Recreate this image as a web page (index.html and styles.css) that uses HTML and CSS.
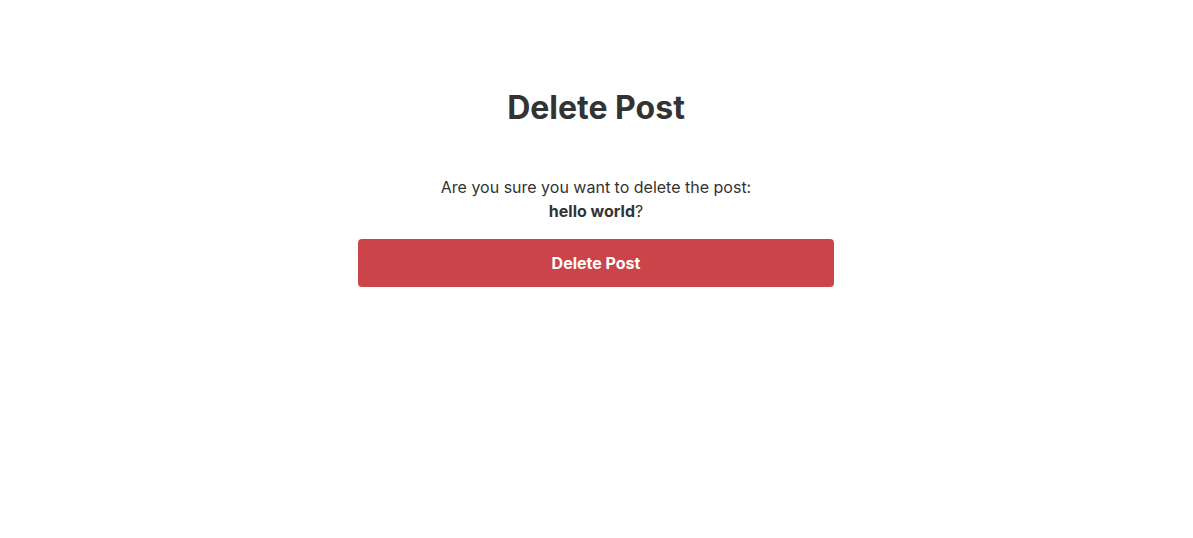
FILE: index.html
```html
<!DOCTYPE html>
<html lang="en">
<head>
<meta charset="utf-8">
<title>Delete Post</title>
<link rel="stylesheet" href="styles.css">
</head>
<body>
<main class="page">
  <h1 class="title">Delete Post</h1>
  <form class="form">
    <p class="message">Are you sure you want to delete the post:<br><strong>hello world</strong>?</p>
    <button type="button" class="btn-danger">Delete Post</button>
  </form>
</main>
</body>
</html>
```
FILE: styles.css
```css
html, body {
  margin: 0;
  padding: 0;
  background: #ffffff;
}
body {
  font-family: Inter, "Noto Sans", sans-serif;
  color: #333333;
  padding-right: 1px;
}
.page {
  width: 476px;
  margin: 0 auto;
  padding-top: 88px;
  display: flex;
  flex-direction: column;
  align-items: stretch;
}
.title {
  margin: 0;
  font-size: 32px;
  font-weight: 700;
  line-height: 40px;
  text-align: center;
  color: #333333;
}
.form {
  margin-top: 47px;
  display: flex;
  flex-direction: column;
  gap: 16px;
}
.message {
  margin: 0;
  font-size: 16px;
  line-height: 24px;
  text-align: center;
}
.message strong {
  font-weight: 700;
}
.btn-danger {
  height: 48px;
  border: none;
  border-radius: 4px;
  background: #cb444a;
  color: #ffffff;
  font-family: Inter, "Noto Sans", sans-serif;
  font-size: 16px;
  font-weight: 700;
  cursor: pointer;
}
```
